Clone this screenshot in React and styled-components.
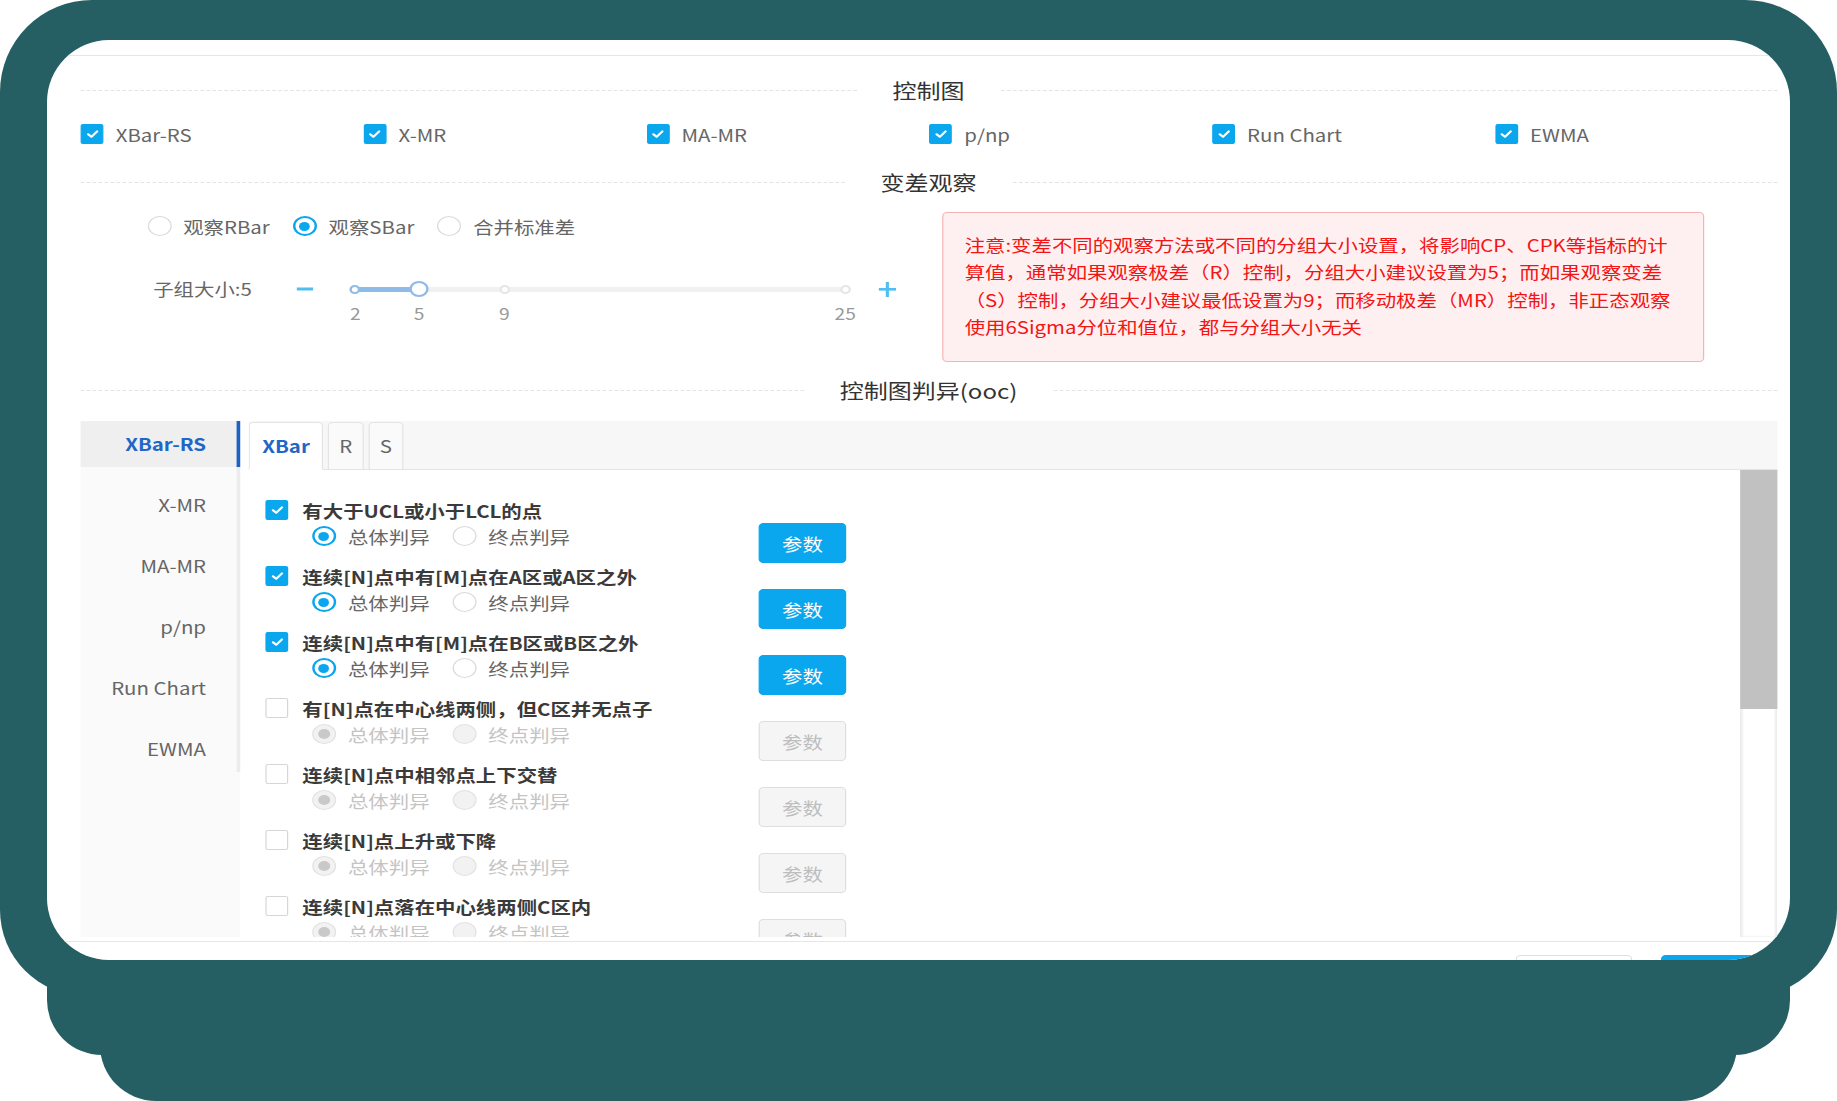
import React from "react";
import styled, { createGlobalStyle } from "styled-components";

const TEAL = "#255f63";
const BLUE = "#0aa7ef";
const LINK = "#1f66c8";

const GlobalStyle = createGlobalStyle`
  html, body {
    margin: 0;
    padding: 0;
    background: #fff;
    overflow: hidden;
  }
  body {
    font-family: "Noto Sans CJK SC", "Noto Sans", sans-serif;
    color: #333;
  }
  * {
    box-sizing: border-box;
  }
`;

/* teal tablet frame */
const Bezel = styled.div`
  position: relative;
  z-index: 1;
  background: ${TEAL};
  border-radius: 92px 92px 86px 86px;
  padding: 40px 47px 36px;
`;

const Ledge = styled.div`
  margin: -60px 47px 0;
  height: 119px;
  background: ${TEAL};
  border-radius: 0 0 55px 55px;
`;

const Base = styled.div`
  margin: -60px 100px 0;
  height: 106px;
  background: ${TEAL};
  border-radius: 0 0 56px 56px;
`;

const Screen = styled.div`
  height: 920px;
  background: #fff;
  border-radius: 62px;
  overflow: hidden;
`;

/* the captured dialog is stretched sideways in the shot */
const Stretch = styled.div`
  width: 1452.5px;
  height: 920px;
  transform: scaleX(1.2);
  transform-origin: 0 0;
  display: flex;
  flex-direction: column;
`;

const DialogHead = styled.div`
  flex: none;
  height: 16px;
  border-bottom: 1px solid #e6e6e6;
`;

const Body = styled.div`
  flex: none;
  height: 885px;
  padding: 0 10.8px 0 27.5px;
  display: flex;
  flex-direction: column;
  overflow: hidden;
`;

const Divider = styled.div`
  flex: none;
  display: flex;
  align-items: center;
  height: 40px;
  margin-top: ${(p) => p.$mt}px;
  font-size: 20px;
  color: #333;
  white-space: nowrap;
  &::before,
  &::after {
    content: "";
    flex: 1;
    border-top: 1px dashed #e3e3e3;
  }
  span {
    padding: 0 30px;
  }
`;

const CheckRow = styled.div`
  flex: none;
  display: grid;
  grid-template-columns: repeat(6, 1fr);
  align-items: center;
  height: 28px;
  margin-top: 10px;
`;

const CheckItem = styled.label`
  display: flex;
  align-items: center;
  gap: 10px;
  font-size: 17px;
  color: #666;
  padding-left: 0.8px;
`;

const CheckBox = styled.span`
  flex: none;
  width: 19px;
  height: 20px;
  border-radius: 2px;
  display: inline-flex;
  align-items: center;
  justify-content: center;
  background: ${(p) => (p.$on ? BLUE : "#fff")};
  border: 1px solid ${(p) => (p.$on ? BLUE : "#d6d6d6")};
`;

const RadioDot = styled.span`
  flex: none;
  width: 20px;
  height: 20px;
  border-radius: 50%;
  display: inline-flex;
  align-items: center;
  justify-content: center;
  border: ${(p) =>
    p.$on && !p.$off ? `2px solid ${BLUE}` : p.$off ? "1px solid #e2e2e2" : "1px solid #dadada"};
  background: ${(p) => (p.$off ? "#f2f2f2" : "#fff")};
  &::after {
    content: "";
    display: ${(p) => (p.$on ? "block" : "none")};
    width: ${(p) => (p.$off ? 10 : 9)}px;
    height: ${(p) => (p.$off ? 10 : 9)}px;
    border-radius: 50%;
    background: ${(p) => (p.$off ? "#c9c9c9" : BLUE)};
  }
`;

const RadioItem = styled.label`
  display: flex;
  align-items: center;
  gap: 10px;
  margin-right: 19px;
  font-size: 17px;
  color: ${(p) => (p.$off ? "#c4c4c4" : "#666")};
`;

const Middle = styled.div`
  flex: none;
  display: flex;
  align-items: flex-start;
  margin-top: 10px;
`;

const LeftCol = styled.div`
  flex: 1;
`;

const RadioRow = styled.div`
  display: flex;
  align-items: center;
  height: 28px;
  padding-left: 56px;
`;

const SliderRow = styled.div`
  display: flex;
  align-items: flex-start;
  height: 48px;
  margin-top: 35px;
  padding-left: 61px;
`;

const SliderLabel = styled.div`
  width: 119.7px;
  height: 28px;
  line-height: 28px;
  font-size: 17px;
  color: #666;
`;

const StepButton = styled.span`
  height: 28px;
  display: inline-flex;
  align-items: center;
  margin-left: ${(p) => p.$ml || 0}px;
`;

const Slider = styled.div`
  position: relative;
  width: 408.3px;
  height: 48px;
  margin-left: 34.7px;
`;

const Rail = styled.div`
  position: absolute;
  left: -3px;
  right: -3px;
  top: 11.5px;
  height: 5px;
  border-radius: 3px;
  background: #f1f1f1;
`;

const RailFill = styled.div`
  position: absolute;
  left: 0;
  top: 11.5px;
  height: 5px;
  border-radius: 3px;
  background: #8fbbe9;
`;

const Stop = styled.span`
  position: absolute;
  top: 14px;
  width: 9px;
  height: 9px;
  margin: -4.5px 0 0 -4.5px;
  border-radius: 50%;
  background: #fff;
  border: 2px solid ${(p) => (p.$on ? "#8fbbe9" : "#e6e6e6")};
`;

const Thumb = styled.span`
  position: absolute;
  top: 14px;
  width: 16px;
  height: 16px;
  margin: -8px 0 0 -8px;
  border-radius: 50%;
  background: #fff;
  border: 2px solid #8fbbe9;
`;

const MarkLabel = styled.span`
  position: absolute;
  top: 28px;
  height: 20px;
  line-height: 20px;
  font-size: 16px;
  color: #999;
  transform: translateX(-50%);
`;

const Notice = styled.div`
  flex: none;
  width: 635px;
  margin-right: 61px;
  padding: 18px 18px 21px;
  border: 1px solid #f7b3b3;
  border-radius: 4px;
  background: #fef0f0;
  color: #f41414;
  font-size: 17px;
  line-height: 27.3px;
  div {
    white-space: nowrap;
  }
`;

const Panel = styled.div`
  flex: none;
  display: flex;
  gap: 7.5px;
  height: 516px;
  margin-top: 11px;
`;

const Side = styled.div`
  flex: none;
  width: 133.3px;
  background: #fafafa;
`;

const SideList = styled.div`
  display: flex;
  flex-direction: column;
  gap: 15px;
  border-right: 3px solid #ececec;
`;

const SideItem = styled.div`
  height: 46px;
  line-height: 46px;
  text-align: right;
  padding-right: 25.3px;
  font-size: 17px;
  color: ${(p) => (p.$active ? LINK : "#666")};
  font-weight: ${(p) => (p.$active ? 700 : 400)};
  background: ${(p) => (p.$active ? "#efefef" : "transparent")};
  margin-right: ${(p) => (p.$active ? "-3px" : "0")};
  border-right: ${(p) => (p.$active ? "3px solid #1a63c4" : "none")};
`;

const TabArea = styled.div`
  flex: 1;
  display: flex;
  flex-direction: column;
  min-width: 0;
`;

const TabBar = styled.div`
  flex: none;
  display: flex;
  align-items: flex-end;
  gap: 4px;
  height: 49px;
  background: #f7f7f7;
  border-bottom: 1px solid #e4e4e4;
`;

const Tab = styled.div`
  height: 48px;
  margin-bottom: -1px;
  padding: 0 ${(p) => (p.$active ? 10 : 8.5)}px;
  line-height: 46px;
  font-size: 17px;
  border: 1px solid #e4e4e4;
  border-radius: 4px 4px 0 0;
  border-bottom-color: ${(p) => (p.$active ? "#fff" : "#e4e4e4")};
  background: ${(p) => (p.$active ? "#fff" : "#fafafa")};
  color: ${(p) => (p.$active ? LINK : "#666")};
  font-weight: ${(p) => (p.$active ? 700 : 400)};
`;

const TabContent = styled.div`
  flex: 1;
  display: flex;
  min-height: 0;
`;

const RuleList = styled.div`
  flex: 1;
  overflow: hidden;
  padding: 27px 0 0 14.2px;
`;

const RuleBlock = styled.div`
  display: flex;
  align-items: flex-end;
  height: 66px;
`;

const RuleMain = styled.div`
  flex: none;
  align-self: flex-start;
  width: 410.8px;
`;

const RuleTitle = styled.div`
  display: flex;
  align-items: center;
  gap: 11.3px;
  height: 26px;
  font-size: 17px;
  font-weight: 700;
  color: #3a3a3a;
  white-space: nowrap;
`;

const RuleOptions = styled.div`
  display: flex;
  align-items: center;
  height: 26px;
  padding-left: 38.3px;
`;

const ParamButton = styled.button`
  flex: none;
  width: 72.5px;
  height: 40px;
  border-radius: 4px;
  font-family: inherit;
  font-size: 17px;
  padding: 0;
  border: 1px solid ${(p) => (p.disabled ? "#dedede" : BLUE)};
  background: ${(p) => (p.disabled ? "#f5f5f5" : BLUE)};
  color: ${(p) => (p.disabled ? "#bdbdbd" : "#fff")};
`;

const ScrollTrack = styled.div`
  flex: none;
  width: 31px;
  background: #fff;
  box-shadow: inset 2px 0 2px #ececec, inset -2px 0 2px #ececec;
`;

const ScrollThumb = styled.div`
  height: 239px;
  background: #c1c1c1;
`;

const Footer = styled.div`
  flex: none;
  display: flex;
  justify-content: flex-end;
  gap: 24px;
  padding: 13px 10.8px 20px 0;
  border-top: 1px solid #e6e6e6;
`;

const FooterButton = styled.button`
  width: 96.7px;
  height: 40px;
  border-radius: 4px;
  font-family: inherit;
  font-size: 17px;
  border: 1px solid ${(p) => (p.$primary ? BLUE : "#dcdfe6")};
  background: ${(p) => (p.$primary ? BLUE : "#fff")};
  color: ${(p) => (p.$primary ? "#fff" : "#606266")};
`;

const charts = ["XBar-RS", "X-MR", "MA-MR", "p/np", "Run Chart", "EWMA"];

const rules = [
  { text: "有大于UCL或小于LCL的点", on: true },
  { text: "连续[N]点中有[M]点在A区或A区之外", on: true },
  { text: "连续[N]点中有[M]点在B区或B区之外", on: true },
  { text: "有[N]点在中心线两侧，但C区并无点子", on: false },
  { text: "连续[N]点中相邻点上下交替", on: false },
  { text: "连续[N]点上升或下降", on: false },
  { text: "连续[N]点落在中心线两侧C区内", on: false },
  { text: "连续[N]点落在中心线同一侧", on: false },
];

const MIN = 2;
const MAX = 25;
const marks = [2, 5, 9, 25];
const pct = (v) => ((v - MIN) / (MAX - MIN)) * 100;

function Check({ on }) {
  return (
    <CheckBox $on={on}>
      {on && (
        <svg width="12" height="12" viewBox="0 0 12 12">
          <path
            d="M2.3 6.2 5 8.8 9.8 3.4"
            fill="none"
            stroke="#fff"
            strokeWidth="2"
            strokeLinecap="round"
            strokeLinejoin="round"
          />
        </svg>
      )}
    </CheckBox>
  );
}

function Radio({ on, off, children }) {
  return (
    <RadioItem $off={off}>
      <RadioDot $on={on} $off={off} />
      {children}
    </RadioItem>
  );
}

function SizeSlider({ value }) {
  return (
    <Slider>
      <Rail />
      <RailFill style={{ width: `${pct(value)}%` }} />
      {marks.map((m) => (
        <Stop key={m} $on={m <= value} style={{ left: `${pct(m)}%` }} />
      ))}
      <Thumb style={{ left: `${pct(value)}%` }} />
      {marks.map((m) => (
        <MarkLabel key={m} style={{ left: `${pct(m)}%` }}>
          {m}
        </MarkLabel>
      ))}
    </Slider>
  );
}

export default function App() {
  const size = 5;
  return (
    <>
      <GlobalStyle />
      <Bezel>
        <Screen>
          <Stretch>
            <DialogHead />
            <Body>
              <Divider $mt={14}>
                <span>控制图</span>
              </Divider>
              <CheckRow>
                {charts.map((c) => (
                  <CheckItem key={c}>
                    <Check on />
                    {c}
                  </CheckItem>
                ))}
              </CheckRow>
              <Divider $mt={14}>
                <span>变差观察</span>
              </Divider>
              <Middle>
                <LeftCol>
                  <RadioRow>
                    <Radio>观察RBar</Radio>
                    <Radio on>观察SBar</Radio>
                    <Radio>合并标准差</Radio>
                  </RadioRow>
                  <SliderRow>
                    <SliderLabel>子组大小:{size}</SliderLabel>
                    <StepButton>
                      <svg width="14" height="4" viewBox="0 0 14 4">
                        <rect x="0" y="0.5" width="14" height="3" fill="#4fbff2" />
                      </svg>
                    </StepButton>
                    <SizeSlider value={size} />
                    <StepButton $ml={28}>
                      <svg width="14.5" height="15" viewBox="0 0 14.5 15">
                        <rect x="0" y="6" width="14.5" height="2.6" fill="#4fbff2" />
                        <rect x="6" y="0" width="2.6" height="15" fill="#4fbff2" />
                      </svg>
                    </StepButton>
                  </SliderRow>
                </LeftCol>
                <Notice>
                  <div>注意:变差不同的观察方法或不同的分组大小设置，将影响CP、CPK等指标的计</div>
                  <div>算值，通常如果观察极差（R）控制，分组大小建议设置为5；而如果观察变差</div>
                  <div>（S）控制，分组大小建议最低设置为9；而移动极差（MR）控制，非正态观察</div>
                  <div>使用6Sigma分位和值位，都与分组大小无关</div>
                </Notice>
              </Middle>
              <Divider $mt={8}>
                <span>控制图判异(ooc)</span>
              </Divider>
              <Panel>
                <Side>
                  <SideList>
                    {charts.map((c, i) => (
                      <SideItem key={c} $active={i === 0}>
                        {c}
                      </SideItem>
                    ))}
                  </SideList>
                </Side>
                <TabArea>
                  <TabBar>
                    <Tab $active>XBar</Tab>
                    <Tab>R</Tab>
                    <Tab>S</Tab>
                  </TabBar>
                  <TabContent>
                    <RuleList>
                      {rules.map((r) => (
                        <RuleBlock key={r.text}>
                          <RuleMain>
                            <RuleTitle>
                              <Check on={r.on} />
                              {r.text}
                            </RuleTitle>
                            <RuleOptions>
                              <Radio on off={!r.on}>
                                总体判异
                              </Radio>
                              <Radio off={!r.on}>终点判异</Radio>
                            </RuleOptions>
                          </RuleMain>
                          <ParamButton disabled={!r.on}>参数</ParamButton>
                        </RuleBlock>
                      ))}
                    </RuleList>
                    <ScrollTrack>
                      <ScrollThumb />
                    </ScrollTrack>
                  </TabContent>
                </TabArea>
              </Panel>
            </Body>
            <Footer>
              <FooterButton>取消</FooterButton>
              <FooterButton $primary>确定</FooterButton>
            </Footer>
          </Stretch>
        </Screen>
      </Bezel>
      <Ledge />
      <Base />
    </>
  );
}
